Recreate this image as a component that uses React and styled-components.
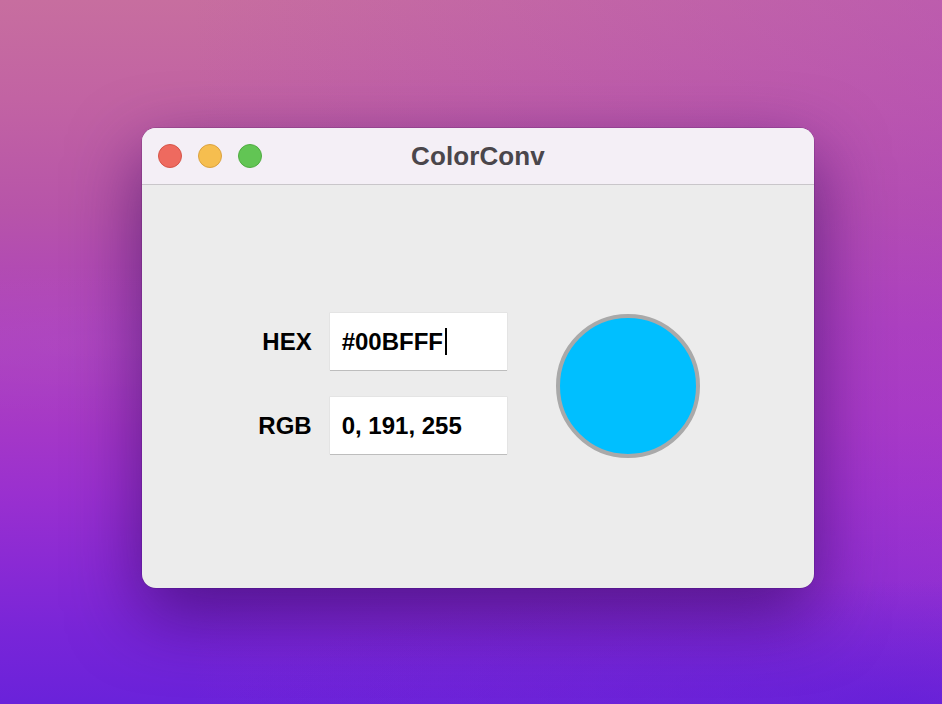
import React from "react";
import styled, { createGlobalStyle } from "styled-components";

const GlobalStyle = createGlobalStyle`
  html, body { margin: 0; padding: 0; }
  body {
    width: 942px;
    height: 704px;
    overflow: hidden;
    font-family: "Liberation Sans", Arial, sans-serif;
  }
`;

const Desktop = styled.div`
  width: 942px;
  height: 704px;
  box-sizing: border-box;
  padding: 128px 0 0 142px;
  background:
    radial-gradient(ellipse 700px 120px at 120px 345px, rgba(255, 255, 255, 0.035), rgba(255, 255, 255, 0) 70%),
    radial-gradient(ellipse 900px 160px at 900px 700px, rgba(85, 25, 220, 0.55), rgba(85, 25, 220, 0) 75%),
    linear-gradient(90deg, rgba(170, 70, 190, 0) 20%, rgba(170, 60, 200, 0.35) 100%),
    linear-gradient(180deg, #c76e9f 0%, #c263a3 14%, #b754a9 30%, #ad42bc 46%, #a638c6 60%, #9a30cf 70%, #8a2ad4 80%, #7825d8 90%, #6a22da 100%);
`;

const Window = styled.div`
  width: 672px;
  height: 460px;
  border-radius: 14px;
  overflow: hidden;
  display: flex;
  flex-direction: column;
  background: #ececec;
  box-shadow: 0 26px 70px rgba(45, 5, 90, 0.6), 0 0 0 0.5px rgba(60, 20, 80, 0.35);
`;

const TitleBar = styled.div`
  height: 56px;
  flex: none;
  display: grid;
  grid-template-columns: 1fr auto 1fr;
  align-items: center;
  background: #f4eff6;
  border-bottom: 1px solid #c9c6ca;
`;

const Lights = styled.div`
  display: flex;
  gap: 16px;
  padding-left: 16px;
`;

const Light = styled.span`
  width: 24px;
  height: 24px;
  box-sizing: border-box;
  border-radius: 50%;
  background: ${(p) => p.$fill};
  border: 1px solid ${(p) => p.$edge};
`;

const Title = styled.div`
  font-size: 26px;
  font-weight: 700;
  color: #4a464b;
  letter-spacing: 0.1px;
`;

const Content = styled.div`
  flex: 1;
  display: flex;
  align-items: center;
  justify-content: center;
  gap: 49px;
  padding-left: 2px;
`;

const Form = styled.div`
  display: grid;
  grid-template-columns: auto 177px;
  column-gap: 18px;
  row-gap: 27px;
  align-items: center;
  margin-bottom: 6px;
`;

const Label = styled.div`
  text-align: right;
  font-size: 24px;
  font-weight: 700;
  color: #000;
`;

const Field = styled.div`
  height: 57px;
  box-sizing: border-box;
  padding: 0 12px;
  display: flex;
  align-items: center;
  background: #fff;
  box-shadow: 0 1px 0 #bdbdbd, 0 0 0 0.5px #dcdcdc;
  font-size: 24px;
  font-weight: 700;
  color: #000;
`;

const Caret = styled.span`
  display: inline-block;
  width: 2px;
  height: 27px;
  margin-left: 2px;
  background: #000;
`;

const Swatch = styled.div`
  width: 144px;
  height: 144px;
  box-sizing: border-box;
  border-radius: 50%;
  border: 4px solid #a9a9a9;
  background: ${(p) => p.$color};
  margin-bottom: 2px;
`;

export default function App() {
  return (
    <>
      <GlobalStyle />
      <Desktop>
        <Window>
          <TitleBar>
            <Lights>
              <Light $fill="#ee6a5f" $edge="#d65448" />
              <Light $fill="#f6be4f" $edge="#dba23f" />
              <Light $fill="#62c554" $edge="#4fab41" />
            </Lights>
            <Title>ColorConv</Title>
            <div />
          </TitleBar>
          <Content>
            <Form>
              <Label>HEX</Label>
              <Field>
                #00BFFF
                <Caret />
              </Field>
              <Label>RGB</Label>
              <Field>0, 191, 255</Field>
            </Form>
            <Swatch $color="#00bfff" />
          </Content>
        </Window>
      </Desktop>
    </>
  );
}
